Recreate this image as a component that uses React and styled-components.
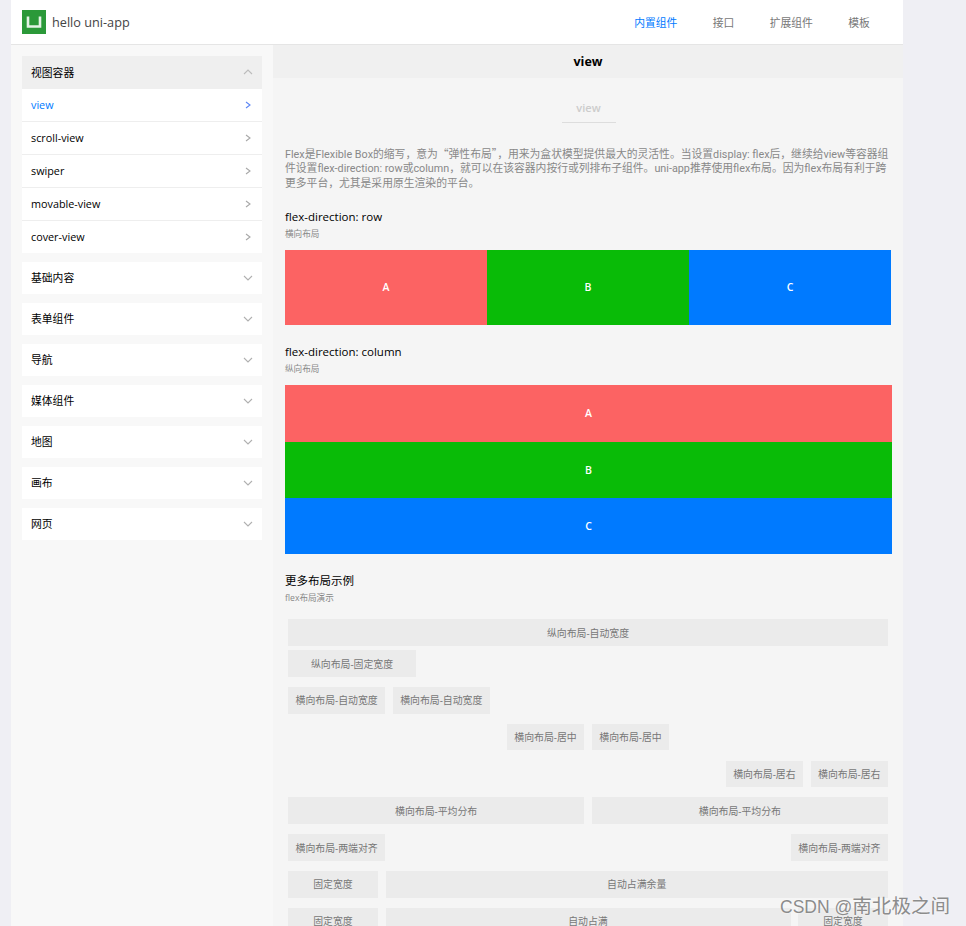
import React from 'react';
import styled, { createGlobalStyle } from 'styled-components';

const GlobalStyle = createGlobalStyle`
  html, body {
    margin: 0;
    padding: 0;
    height: 926px;
    overflow: hidden;
    background: #efeff4;
  }
  * {
    box-sizing: border-box;
  }
  #root {
    font-family: 'Open Sans', 'Noto Sans CJK SC', sans-serif;
  }
`;

const Logo = () => (
  <svg width="24" height="24" viewBox="0 0 24 24">
    <rect width="24" height="24" fill="#2b9939" />
    <path d="M6 6.5V16.5H18V6.5" fill="none" stroke="#e4f3e6" strokeWidth="2.6" />
  </svg>
);

const Chevron = ({ dir, color }) => {
  const points = {
    right: '3,2 7,5 3,8',
    down: '1,3 5,7 9,3',
    up: '1,7 5,3 9,7',
  };
  return (
    <svg width="10" height="10" viewBox="0 0 10 10">
      <polyline points={points[dir]} fill="none" stroke={color || '#b0b0b0'} strokeWidth="1.1" />
    </svg>
  );
};

const navs = ['内置组件', '接口', '扩展组件', '模板'];
const viewItems = ['view', 'scroll-view', 'swiper', 'movable-view', 'cover-view'];
const groups = ['基础内容', '表单组件', '导航', '媒体组件', '地图', '画布', '网页'];

const App = () => {
  return (
    <Page>
      <GlobalStyle />
      <Header>
        <Brand>
          <Logo />
          <BrandName>hello uni-app</BrandName>
        </Brand>
        <Nav>
          {navs.map((name, i) => (
            <NavItem key={name} $active={i === 0}>
              {name}
            </NavItem>
          ))}
        </Nav>
      </Header>

      <Body>
        <Sidebar>
          <Card>
            <OpenHead>
              <span>视图容器</span>
              <Chevron dir="up" color="#bcbcbc" />
            </OpenHead>
            {viewItems.map((name, i) => (
              <MenuItem key={name} $active={i === 0}>
                <MenuLabel>{name}</MenuLabel>
                <Chevron dir="right" color={i === 0 ? '#5c86f5' : '#a8a8a8'} />
              </MenuItem>
            ))}
          </Card>
          {groups.map((name) => (
            <GroupHead key={name}>
              <MenuLabel>{name}</MenuLabel>
              <Chevron dir="down" />
            </GroupHead>
          ))}
        </Sidebar>

        <Main>
          <TitleBar>view</TitleBar>
          <Content>
            <SubTitleWrap>
              <SubTitle>view</SubTitle>
            </SubTitleWrap>
            <Intro>
              Flex是Flexible Box的缩写，意为<Quote>“</Quote>弹性布局<Quote>”</Quote>，用来为盒状模型提供最大的灵活性。当设置display: flex后，继续给view等容器组件设置flex-direction: row或column，就可以在该容器内按行或列排布子组件。uni-app推荐使用flex布局。因为flex布局有利于跨更多平台，尤其是采用原生渲染的平台。
            </Intro>

            <SectionTitle>flex-direction: row</SectionTitle>
            <SectionDesc>横向布局</SectionDesc>
            <RowDemo>
              <ColorBlock $bg="#fc6363">A</ColorBlock>
              <ColorBlock $bg="#09bb07">B</ColorBlock>
              <ColorBlock $bg="#007aff">C</ColorBlock>
            </RowDemo>

            <SectionTitle $top={19}>flex-direction: column</SectionTitle>
            <SectionDesc>纵向布局</SectionDesc>
            <ColumnDemo>
              <ColorBlock $bg="#fc6363">A</ColorBlock>
              <ColorBlock $bg="#09bb07">B</ColorBlock>
              <ColorBlock $bg="#007aff">C</ColorBlock>
            </ColumnDemo>

            <SectionTitle $top={19}>更多布局示例</SectionTitle>
            <SectionDesc>flex布局演示</SectionDesc>

            <Samples>
              <Stack>
                <Sample>纵向布局-自动宽度</Sample>
                <Sample $width={128}>纵向布局-固定宽度</Sample>
              </Stack>
              <SampleRow>
                <Sample $pad>横向布局-自动宽度</Sample>
                <Sample $pad>横向布局-自动宽度</Sample>
              </SampleRow>
              <SampleRow $justify="center">
                <Sample $pad>横向布局-居中</Sample>
                <Sample $pad>横向布局-居中</Sample>
              </SampleRow>
              <SampleRow $justify="flex-end">
                <Sample $pad>横向布局-居右</Sample>
                <Sample $pad>横向布局-居右</Sample>
              </SampleRow>
              <SampleRow>
                <Sample $grow>横向布局-平均分布</Sample>
                <Sample $grow>横向布局-平均分布</Sample>
              </SampleRow>
              <SampleRow $justify="space-between">
                <Sample $pad>横向布局-两端对齐</Sample>
                <Sample $pad>横向布局-两端对齐</Sample>
              </SampleRow>
              <SampleRow>
                <Sample $width={90}>固定宽度</Sample>
                <Sample $grow>自动占满余量</Sample>
              </SampleRow>
              <SampleRow>
                <Sample $width={90}>固定宽度</Sample>
                <Sample $grow>自动占满</Sample>
                <Sample $width={90}>固定宽度</Sample>
              </SampleRow>
            </Samples>
          </Content>
        </Main>
      </Body>

      <Watermark>
        CSDN @<WatermarkName>南北极之间</WatermarkName>
      </Watermark>
    </Page>
  );
};

export default App;

const Page = styled.div`
  width: 892px;
  height: 926px;
  margin-left: 11px;
  display: flex;
  flex-direction: column;
`;

const Header = styled.div`
  height: 45px;
  flex: none;
  display: flex;
  align-items: center;
  justify-content: space-between;
  padding: 0 15.5px 0 11px;
  background: #fff;
  border-bottom: 1px solid #e5e5e5;
`;

const Brand = styled.div`
  display: flex;
  align-items: center;
  gap: 6px;
  margin-top: -1px;
`;

const BrandName = styled.div`
  font-size: 12.7px;
  color: #444;
`;

const Nav = styled.div`
  display: flex;
`;

const NavItem = styled.div`
  padding: 0 17.7px;
  font-size: 10.8px;
  color: ${(props) => (props.$active ? '#007aff' : '#777')};
`;

const Body = styled.div`
  flex: 1;
  min-height: 0;
  display: flex;
`;

const Sidebar = styled.div`
  width: 262px;
  flex: none;
  padding: 11px;
  background: #f8f8f8;
`;

const Card = styled.div`
  background: #fff;
`;

const MenuLabel = styled.span`
  padding-bottom: 2px;
`;

const OpenHead = styled.div`
  height: 33px;
  display: flex;
  align-items: center;
  justify-content: space-between;
  padding: 0 9px 2px;
  background: #efefef;
  font-size: 10.8px;
  color: #000;
`;

const MenuItem = styled.div`
  height: 33px;
  display: flex;
  align-items: center;
  justify-content: space-between;
  padding: 0 9px;
  font-size: 10.8px;
  color: ${(props) => (props.$active ? '#007aff' : '#000')};
  border-bottom: 1px solid #eee;
  &:last-child {
    height: 32px;
    border-bottom: 0;
  }
`;

const GroupHead = styled.div`
  height: 32px;
  margin-top: 9px;
  display: flex;
  align-items: center;
  justify-content: space-between;
  padding: 0 9px;
  background: #fff;
  font-size: 10.8px;
  color: #000;
`;

const Main = styled.div`
  flex: 1;
  min-width: 0;
  background: #f5f5f5;
  overflow: hidden;
`;

const TitleBar = styled.div`
  height: 33px;
  display: flex;
  align-items: center;
  justify-content: center;
  background: #f0f0f0;
  font-size: 12.5px;
  font-weight: 700;
  color: #000;
`;

const Content = styled.div`
  padding: 0 11px 0 12px;
`;

const SubTitleWrap = styled.div`
  display: flex;
  justify-content: center;
  padding-top: 22px;
`;

const SubTitle = styled.div`
  width: 54px;
  height: 23px;
  text-align: center;
  font-size: 11px;
  font-weight: 600;
  line-height: 15px;
  color: #ccc;
  border-bottom: 1px solid #ddd;
`;

const Intro = styled.div`
  margin-top: 25px;
  font-family: Roboto, 'Noto Sans CJK SC', sans-serif;
  font-size: 10.8px;
  line-height: 14.4px;
  color: #888;
  width: 604px;
`;

const Quote = styled.span`
  font-family: 'Noto Sans CJK SC', sans-serif;
  line-height: 0;
`;

const SectionTitle = styled.div`
  margin-top: ${(props) => (props.$top ? props.$top : 18)}px;
  font-size: 11.5px;
  line-height: 16px;
  color: #000;
`;

const SectionDesc = styled.div`
  margin-top: 3px;
  font-size: 8.6px;
  line-height: 12px;
  color: #888;
`;

const RowDemo = styled.div`
  margin-top: 10px;
  height: 75px;
  width: 606px;
  display: flex;
  > div {
    flex: 1;
    padding-bottom: 2px;
  }
`;

const ColumnDemo = styled.div`
  margin-top: 10px;
  height: 169px;
  width: 607px;
  display: flex;
  flex-direction: column;
  > div {
    flex: 1;
  }
`;

const ColorBlock = styled.div`
  display: flex;
  align-items: center;
  justify-content: center;
  background: ${(props) => props.$bg};
  color: #fff;
  font-size: 10.5px;
  font-weight: 600;
`;

const Samples = styled.div`
  margin-top: 15px;
  padding: 0 3px;
  width: 606px;
  display: flex;
  flex-direction: column;
  gap: 10.2px;
`;

const Stack = styled.div`
  display: flex;
  flex-direction: column;
  gap: 4.5px;
`;

const SampleRow = styled.div`
  display: flex;
  gap: 7.5px;
  justify-content: ${(props) => props.$justify || 'flex-start'};
`;

const Sample = styled.div`
  height: 26.6px;
  display: flex;
  align-items: center;
  justify-content: center;
  padding: ${(props) => (props.$pad ? '0 7.5px' : '0')};
  flex: ${(props) => (props.$grow ? '1 1 0' : 'none')};
  width: ${(props) => (props.$width ? `${props.$width}px` : 'auto')};
  background: #ebebeb;
  font-size: 9.9px;
  color: #777;
`;

const Watermark = styled.div`
  position: absolute;
  left: 780px;
  top: 895px;
  font-family: 'Liberation Sans', 'Noto Sans CJK SC', sans-serif;
  font-size: 17.5px;
  line-height: 24px;
  white-space: nowrap;
  color: #8c8c8c;
  text-shadow: 0 0 2px #fff;
`;

const WatermarkName = styled.span`
  font-size: 19.6px;
  line-height: 0;
`;
